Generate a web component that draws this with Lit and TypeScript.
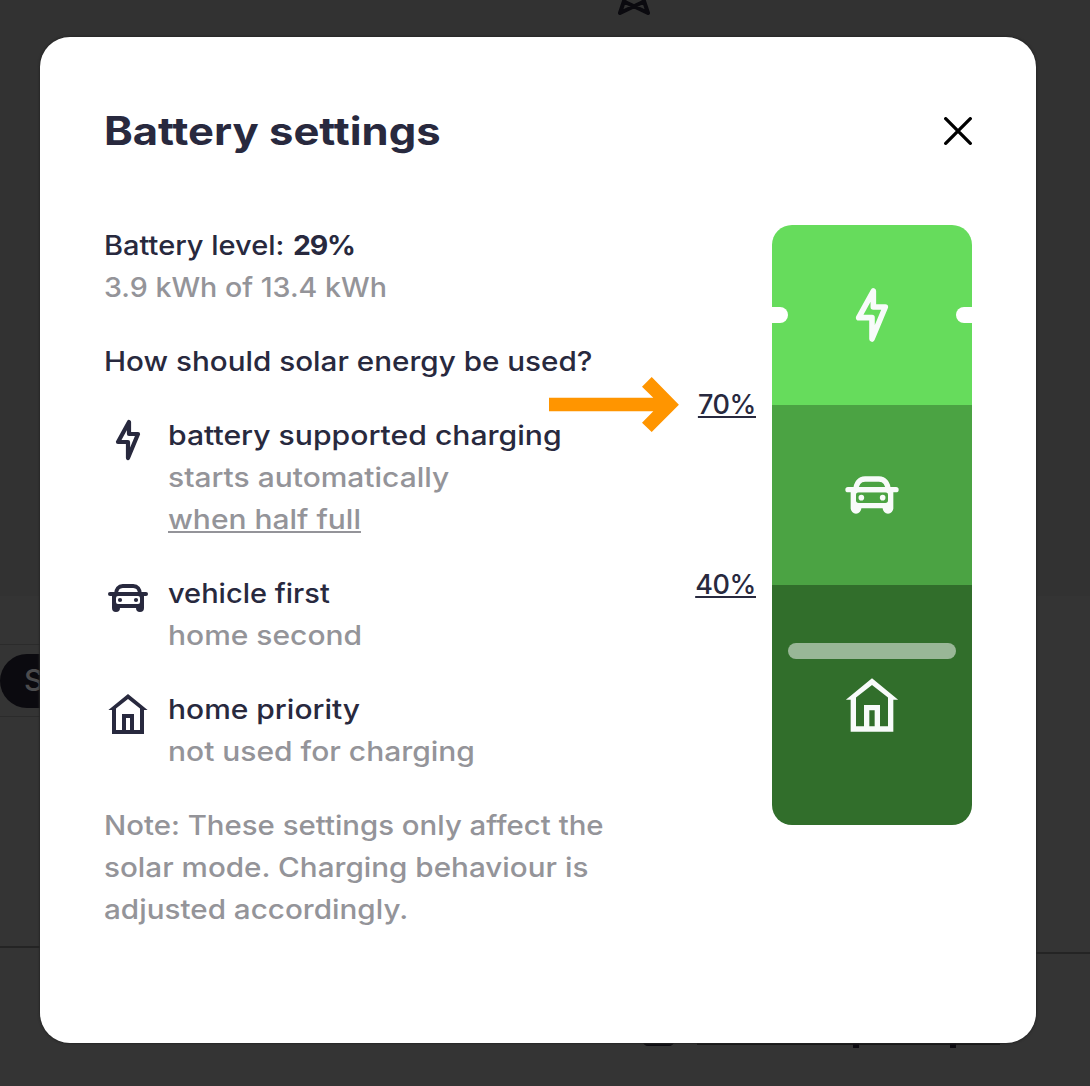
import { LitElement, html, css, svg } from "lit";
import { customElement, property } from "lit/decorators.js";

const shapes: Record<string, unknown> = {
  bolt: svg`<path d="M12.5 3v6H17l-5 12v-8H7z" fill="none" stroke="currentColor" stroke-width="2.1" stroke-linejoin="round"/>`,
  car: svg`
    <path d="M6 10.2C6 7.6 7.4 6 9.4 6h5.2C16.6 6 18 7.6 18 10.2" fill="none" stroke="currentColor" stroke-width="2"/>
    <rect x="2" y="9" width="20" height="2" rx="1" fill="currentColor"/>
    <path fill-rule="evenodd" fill="currentColor" d="M4 10.5H20V17a2 2 0 0 1-4 0H8a2 2 0 0 1-4 0zM7 11a1 1 0 0 0-1 1v2a1 1 0 0 0 1 1h10a1 1 0 0 0 1-1v-2a1 1 0 0 0-1-1z"/>
    <circle cx="8" cy="13" r="1.05" fill="currentColor"/>
    <circle cx="16" cy="13" r="1.05" fill="currentColor"/>`,
  home: svg`<path fill-rule="evenodd" fill="currentColor" d="M12 2 21.8 10H20V22H4V10H2.2zM12 4.5 6 9.2V20H9V12h6v8h3V9.2zM11 14v6h2v-6z"/>`,
};

@customElement("ui-icon")
export class UiIcon extends LitElement {
  @property() name = "bolt";
  static styles = css`
    :host { display: block; width: 48px; height: 48px; flex: none; }
    svg { display: block; width: 100%; height: 100%; }
  `;
  render() {
    return html`<svg viewBox="0 0 24 24">${shapes[this.name]}</svg>`;
  }
}

@customElement("battery-bar")
export class BatteryBar extends LitElement {
  static styles = css`
    :host { display: block; width: 200px; height: 600px; position: relative; border-radius: 20px; overflow: hidden; color: #f8fbfa; }
    .stack { display: flex; flex-direction: column; height: 100%; }
    .zone { display: flex; align-items: center; justify-content: center; }
    .zone ui-icon { width: 64px; height: 64px; }
    .top { flex: 30; background: #66dc5c; }
    .mid { flex: 30; background: #4ba343; }
    .low { flex: 40; background: #316e2b; }
    .notch { position: absolute; top: 82px; width: 16px; height: 16px; background: #fff; }
    .left { left: 0; border-radius: 0 8px 8px 0; }
    .right { right: 0; border-radius: 8px 0 0 8px; }
    .level { position: absolute; left: 16px; right: 16px; top: 418px; height: 16px; border-radius: 8px; background: #99b797; }
  `;
  render() {
    return html`
      <div class="stack">
        <div class="zone top"><ui-icon name="bolt"></ui-icon></div>
        <div class="zone mid"><ui-icon name="car"></ui-icon></div>
        <div class="zone low"><ui-icon name="home"></ui-icon></div>
      </div>
      <div class="notch left"></div>
      <div class="notch right"></div>
      <div class="level"></div>
    `;
  }
}

@customElement("app-root")
export class AppRoot extends LitElement {
  static styles = css`
    :host {
      display: block; position: relative; box-sizing: border-box; width: 1090px; height: 1086px;
      padding: 37px 54px 43px 40px; overflow: hidden; background: #323232;
      font: 500 27px/42px Inter, "Open Sans", sans-serif; color: #28293e;
    }
    .backdrop { position: absolute; left: 0; top: 0; width: 1090px; height: 1086px; display: block; }
    .pill {
      position: absolute; left: 0; top: 654px; width: 120px; height: 54px; box-sizing: border-box;
      padding-left: 24px; border-radius: 27px; background: #0b0a0f; color: #4b4b4d; line-height: 52px; font-size: 30px;
    }
    .modal {
      position: relative; box-sizing: border-box; height: 1006px; padding: 64px; border-radius: 30px;
      background: #fff; box-shadow: 0 0 2px 1px #272727; white-space: nowrap;
    }
    header { display: flex; align-items: center; justify-content: space-between; height: 60px; }
    h1 { margin: 0; font-size: 39px; line-height: 60px; font-weight: 700; transform: scaleX(1.117); transform-origin: left; }
    .close { display: block; width: 28px; height: 28px; }
    .body { display: flex; justify-content: space-between; padding-top: 63px; }
    .info { display: flex; flex-direction: column; gap: 32px; }
    .muted { color: #949499; }
    .item { display: flex; gap: 16px; }
    .item ui-icon { margin-top: 1px; }
    p { margin: 0; transform-origin: left; }
    b { font-size: 26.5px; font-weight: 700; letter-spacing: -1.2px; margin-left: 1px; }
    u { text-decoration-thickness: 2px; text-underline-offset: 2px; text-decoration-skip-ink: none; }
    .meter { display: flex; gap: 16px; padding-top: 1px; }
    .limits { display: flex; flex-direction: column; align-items: flex-end; padding-top: 159px; gap: 138px; letter-spacing: -0.38px; }
    .arrow { position: absolute; left: 508px; top: 339px; width: 132px; height: 57px; }
    .w1 { transform: scaleX(1.06); }
    .w2 { transform: scaleX(1.074); }
    .w3 { transform: scaleX(1.088); }
    .w4 { transform: scaleX(1.098); }
    .w5 { transform: scaleX(1.11); }
    .w6 { transform: scaleX(1.116); }
  `;

  render() {
    return html`
      <svg class="backdrop" viewBox="0 0 1090 1086">
        <rect y="596" width="1090" height="490" fill="#343434"/>
        <path d="M0 644.5H50M0 716.5H50" stroke="#2b2b2b"/>
        <path d="M0 947H50M1030 953H1090" stroke="#242424" stroke-width="2"/>
        <path d="M625-2 620 13 643 2M643-2 648 13 625 2" fill="none" stroke="#0b0a0f" stroke-width="4" stroke-linecap="round" stroke-linejoin="round"/>
        <path d="M642 1041h33q-2 5-6 5h-21q-4 0-6-5z" fill="#0b0a0f"/>
        <path d="M697 1040H1000V1045H697z" fill="#151515"/>
        <path d="M853 1040h6v8h-6zM950 1040h6v8h-6z" fill="#0b0a0f"/>
      </svg>
      <div class="pill">S</div>
      <div class="modal">
        <header>
          <h1>Battery settings</h1>
          <svg class="close" viewBox="0 0 28 28"><path d="M1.7 1.7 26.3 26.3M26.3 1.7 1.7 26.3" stroke="#000" stroke-width="3.3" stroke-linecap="round"/></svg>
        </header>
        <div class="body">
          <div class="info">
            <div>
              <p class="w2">Battery level: <b>29%</b></p>
              <p class="muted w1">3.9 kWh of 13.4 kWh</p>
            </div>
            <p class="w4">How should solar energy be used?</p>
            <div class="item">
              <ui-icon name="bolt"></ui-icon>
              <div>
                <p class="w6">battery supported charging</p>
                <p class="muted w5">starts automatically</p>
                <p class="muted w5"><u>when half full</u></p>
              </div>
            </div>
            <div class="item">
              <ui-icon name="car"></ui-icon>
              <div>
                <p class="w2">vehicle first</p>
                <p class="muted w5">home second</p>
              </div>
            </div>
            <div class="item">
              <ui-icon name="home"></ui-icon>
              <div>
                <p class="w5">home priority</p>
                <p class="muted w5">not used for charging</p>
              </div>
            </div>
            <div class="muted">
              <p class="w3">Note: These settings only affect the</p>
              <p class="w4">solar mode. Charging behaviour is</p>
              <p class="w4">adjusted accordingly.</p>
            </div>
          </div>
          <div class="meter">
            <div class="limits">
              <u>70%</u>
              <u>40%</u>
            </div>
            <battery-bar></battery-bar>
          </div>
        </div>
        <svg class="arrow" viewBox="548 376 132 57"><path d="M549 397.7H653.3L642 386.7 651.7 377 678.9 404.7 651.7 432 642 422.7 653.3 411.3H549z" fill="#ff9500"/></svg>
      </div>
    `;
  }
}
